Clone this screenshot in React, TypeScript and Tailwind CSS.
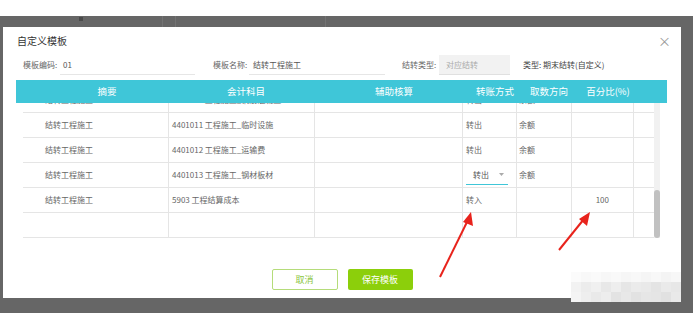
import React from "react";

const rows = [
  { a: "结转工程施工", b: "4401010 工程施工_钢筋混凝土", d: "转出", e: "余额", f: "" },
  { a: "结转工程施工", b: "4401011 工程施工_临时设施", d: "转出", e: "余额", f: "" },
  { a: "结转工程施工", b: "4401012 工程施工_运输费", d: "转出", e: "余额", f: "" },
  { a: "结转工程施工", b: "4401013 工程施工_钢材板材", d: "select", e: "余额", f: "" },
  { a: "结转工程施工", b: "5903 工程结算成本", d: "转入", e: "", f: "100" },
  { a: "", b: "", d: "", e: "", f: "" },
];

const mosaic: string[][] = [
  ["#fbfbfb", "#f8f8f8", "#fafafa", "#f7f7f7", "#f9f9f9", "#f6f6f6", "#f8f8f8", "#f5f5f5", "#f8f8f8", "#f4f4f4", "#f7f7f7"],
  ["#f2f2f2", "#ececec", "#f0f0f0", "#e8e8e8", "#eeeeee", "#e6e6e6", "#ebebeb", "#e9e9e9", "#e4e4e4", "#eaeaea", "#e7e7e7"],
  ["#f4f4f4", "#eeeeee", "#e9e9e9", "#ededed", "#e3e3e3", "#e8e8e8", "#e2e2e2", "#e6e6e6", "#e5e5e5", "#e1e1e1", "#e9e9e9"],
];

export default function App() {
  return (
    <div className="relative w-[693px] h-[313px] overflow-hidden bg-white font-['Noto_Sans_CJK_SC','Noto_Sans',sans-serif]">
      <div className="h-[16px] bg-white" />
      <div className="relative flex h-[297px] bg-[#666666] pl-[3px] pr-[12px] pt-[11px] pb-[15px]">
        <div className="absolute left-[162px] top-0 h-[11px] w-px bg-[#737373]" />
        <div className="absolute left-[175px] top-0 h-[11px] w-px bg-[#737373]" />
        <div className="absolute left-[325px] top-0 h-[11px] w-px bg-[#737373]" />
        <div className="absolute left-[79px] top-[1px] h-[4px] w-[4px] bg-[#4a4a4a]" />
        <div className="flex flex-1 flex-col bg-white">
          {/* title */}
          <div className="flex h-[26px] items-center justify-between pl-[14px] pr-[10px]">
            <span className="text-[10px] text-[#333]">自定义模板</span>
            <span className="text-[13px] leading-none text-[#999]">×</span>
          </div>
          {/* form */}
          <div className="mt-[2px] flex h-[20px] items-center text-[8px]">
            <span className="ml-[20px] w-[37px] text-[#666]">模板编码:</span>
            <div className="flex h-[20px] w-[135px] items-center border-b border-[#e6e6e6] pl-[3px] text-[#555]">01</div>
            <span className="ml-[18px] w-[36px] text-[#666]">模板名称:</span>
            <div className="flex h-[20px] w-[136px] items-center border-b border-[#e6e6e6] pl-[4px] text-[#555]">结转工程施工</div>
            <span className="ml-[17px] w-[37px] text-[#666]">结转类型:</span>
            <div className="flex h-[20px] w-[71px] items-center border-b border-[#e0e0e0] bg-[#f2f2f2] pl-[7px] text-[#aaa]">对应结转</div>
            <span className="ml-[13px] text-[#444]">类型: 期末结转(自定义)</span>
          </div>
          {/* header */}
          <div className="ml-[13px] mt-[5px] flex h-[23px] w-[651px] items-center bg-[#3fc6d8] text-[9.5px] text-white">
            <div className="w-[156px] pl-[26px] text-center">摘要</div>
            <div className="w-[148px] text-center">会计科目</div>
            <div className="w-[148px] text-center">辅助核算</div>
            <div className="w-[54px] text-center">转账方式</div>
            <div className="w-[54px] text-center">取数方向</div>
            <div className="w-[64px] text-center">百分比(%)</div>
            <div className="flex-1" />
          </div>
          {/* body */}
          <div className="ml-[20px] flex h-[135px] w-[637px]">
            <div className="h-[135px] w-[631px] overflow-hidden">
              <div className="mt-[-15px]">
                {rows.map((r, i) => (
                  <div key={i} className="flex h-[25px] border-b border-[#e5e5e5] text-[8px] text-[#666]">
                    <div className="flex w-[146px] items-center border-r border-[#e5e5e5] pl-[22px]">{r.a}</div>
                    <div className="flex w-[146px] items-center border-r border-[#e5e5e5] pl-[3px]">{r.b}</div>
                    <div className="w-[148px] border-r border-[#e5e5e5]" />
                    <div className="flex w-[54px] items-center border-r border-[#e5e5e5] pl-[3px]">
                      {r.d === "select" ? (
                        <div className="flex h-[19px] w-[42px] items-center justify-between border-b border-[#3fc6d8] pl-[7px] pr-[4px] text-[#555]">
                          <span>转出</span>
                          <svg width="5" height="3" viewBox="0 0 5 3"><path d="M0 0h5L2.5 3z" fill="#aaa" /></svg>
                        </div>
                      ) : (
                        r.d
                      )}
                    </div>
                    <div className="flex w-[55px] items-center border-r border-[#e5e5e5] pl-[2px]">{r.e}</div>
                    <div className="flex w-[62px] items-center justify-end border-r border-[#e5e5e5] pr-[24px]">{r.f}</div>
                    <div className="flex-1" />
                  </div>
                ))}
              </div>
            </div>
            <div className="relative h-[135px] w-[6px] bg-[#f1f1f1]">
              <div className="absolute bottom-0 left-0 h-[48px] w-[6px] rounded-[3px] bg-[#c1c1c1]" />
            </div>
          </div>
          {/* buttons */}
          <div className="mt-[31px] flex justify-center gap-[10px] text-[9px]">
            <div className="flex h-[21px] w-[66px] items-center justify-center rounded-[2px] border border-[#b5dc7a] text-[#8cc63f]">取消</div>
            <div className="flex h-[21px] w-[65px] items-center justify-center rounded-[2px] bg-[#8ccf0b] text-white">保存模板</div>
          </div>
        </div>
      </div>
      {/* mosaic */}
      <div className="absolute left-[571px] top-[272px] flex flex-col">
        {mosaic.map((row, i) => (
          <div key={i} className="flex">
            {row.map((c, j) => (
              <div key={j} className="h-[10px] w-[10px]" style={{ backgroundColor: c }} />
            ))}
          </div>
        ))}
      </div>
      {/* arrows */}
      <svg className="absolute left-0 top-0" width="693" height="313" viewBox="0 0 693 313">
        <line x1="440" y1="277" x2="468" y2="220" stroke="#e8231c" strokeWidth="2" />
        <polygon points="471,212 473,226 463,222" fill="#e8231c" />
        <line x1="559" y1="250" x2="584" y2="219" stroke="#e8231c" strokeWidth="2" />
        <polygon points="590,212 587,226 579,219" fill="#e8231c" />
      </svg>
    </div>
  );
}
